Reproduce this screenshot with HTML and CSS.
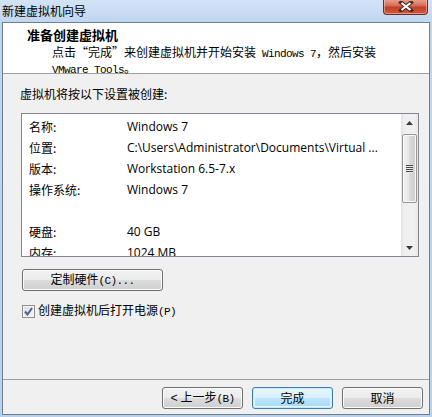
FILE: index.html
```html
<!DOCTYPE html>
<html lang="zh-CN">
<head>
<meta charset="utf-8">
<title>新建虚拟机向导</title>
<link rel="stylesheet" href="styles.css">
</head>
<body>
<div class="window">
  <div class="titlebar">
    <span class="title">新建虚拟机向导</span>
    <div class="close">
      <svg width="16" height="11" viewBox="0 0 16 11">
        <path d="M3 1.5 L13 9.5 M13 1.5 L3 9.5" stroke="#4a2a26" stroke-width="4" stroke-linecap="square" fill="none"/>
        <path d="M3.5 2 L12.5 9 M12.5 2 L3.5 9" stroke="#ffffff" stroke-width="2.2" fill="none"/>
      </svg>
    </div>
  </div>
  <div class="client">
    <div class="header">
      <div class="h-title">准备创建虚拟机</div>
      <div class="h-sub">点击“完成”来创建虚拟机并开始安装<span class="m"> Windows 7</span>，然后安装<br><span class="m">VMware Tools</span>。</div>
    </div>
    <div class="body">
      <div class="intro">虚拟机将按以下设置被创建:</div>
      <div class="listbox">
        <div class="rows">
          <div class="row"><span class="label">名称:</span><span class="value">Windows 7</span></div>
          <div class="row"><span class="label">位置:</span><span class="value">C:\Users\Administrator\Documents\Virtual ...</span></div>
          <div class="row"><span class="label">版本:</span><span class="value">Workstation 6.5-7.x</span></div>
          <div class="row"><span class="label">操作系统:</span><span class="value">Windows 7</span></div>
          <div class="row"><span class="label"></span><span class="value"></span></div>
          <div class="row"><span class="label">硬盘:</span><span class="value">40 GB</span></div>
          <div class="row"><span class="label">内存:</span><span class="value">1024 MB</span></div>
        </div>
        <div class="scrollbar">
          <div class="sb-btn">
            <svg width="7" height="4" viewBox="0 0 7 4"><path d="M3.5 0 L7 4 L0 4 Z" fill="#3a3a3a"/></svg>
          </div>
          <div class="sb-track">
            <div class="sb-thumb">
              <svg width="7" height="8" viewBox="0 0 7 8">
                <path d="M0 0.5 H7 M0 2.5 H7 M0 4.5 H7 M0 6.5 H7" stroke="#4b4b4b" stroke-width="1"/>
                <path d="M0 1.5 H7 M0 3.5 H7 M0 5.5 H7 M0 7.5 H7" stroke="#e8e8e8" stroke-width="1"/>
              </svg>
            </div>
          </div>
          <div class="sb-btn">
            <svg width="7" height="4" viewBox="0 0 7 4"><path d="M0 0 L7 0 L3.5 4 Z" fill="#3a3a3a"/></svg>
          </div>
        </div>
      </div>
      <button class="btn custom" type="button">定制硬件<span class="m">(C)...</span></button>
      <label class="check">
        <span class="box">
          <svg width="9" height="9" viewBox="0 0 9 9"><path d="M1 4.5 L3.5 7.5 L8 1" stroke="#4b5f9a" stroke-width="2" fill="none"/></svg>
        </span>
        <span>创建虚拟机后打开电源<span class="m">(P)</span></span>
      </label>
    </div>
    <div class="footer">
      <button class="btn nav" type="button"><span class="lt">&lt;</span> 上一步<span class="m">(B)</span></button>
      <button class="btn nav default" type="button">完成</button>
      <button class="btn nav" type="button">取消</button>
    </div>
  </div>
</div>
</body>
</html>
```
FILE: styles.css
```css
* { box-sizing: border-box; }
html, body { margin: 0; padding: 0; }
body {
  width: 432px;
  height: 417px;
  overflow: hidden;
  background: #bcd3ee;
  font-family: "Noto Sans CJK SC", sans-serif;
  font-size: 12px;
  color: #000;
}
.window {
  width: 432px;
  height: 417px;
  background: linear-gradient(#d2e3f6, #c0d6ef 22px, #bad1ec);
  display: flex;
  flex-direction: column;
}
.titlebar {
  height: 22px;
  position: relative;
  display: flex;
  align-items: center;
  padding: 0 0 1px 2px;
}
.title {
  font-size: 12px;
  line-height: 16px;
}
.close {
  position: absolute;
  left: 383px;
  top: -1px;
  width: 45px;
  height: 16px;
  border: 1px solid #6b2d24;
  border-top: none;
  border-radius: 0 0 4px 4px;
  background: linear-gradient(#e9a796, #d66b55 45%, #c23f28 55%, #cf5a40);
  box-shadow: inset 0 0 0 1px rgba(255, 210, 200, 0.5);
  display: flex;
  align-items: center;
  justify-content: center;
}
.client {
  margin-left: 2px;
  width: 428px;
  height: 393px;
  border: 1px solid #6f7f93;
  background: #f0f0f0;
  display: flex;
  flex-direction: column;
}
.header {
  height: 51px;
  flex: none;
  background: #fff;
  border-bottom: 1px solid #a0a0a0;
  padding: 4px 0 0 24px;
}
.h-title {
  font-weight: bold;
  font-size: 13px;
  line-height: 16px;
}
.h-sub {
  margin-top: 2px;
  padding-left: 25px;
  font-size: 12px;
  line-height: 14px;
}
.m {
  font-family: "Liberation Mono", monospace;
  font-size: 11px;
  letter-spacing: -0.6px;
}
.body {
  flex: 1;
  padding: 12px 0 0 17px;
  display: flex;
  flex-direction: column;
  align-items: flex-start;
}
.intro {
  line-height: 16px;
}
.listbox {
  margin: 11px 0 0 1px;
  width: 398px;
  height: 144px;
  border: 1px solid #828790;
  background: #fff;
  display: flex;
  overflow: hidden;
}
.rows {
  flex: 1;
  padding-top: 2px;
  overflow: hidden;
}
.row {
  display: flex;
  height: 21px;
  line-height: 21px;
  padding-left: 7px;
  white-space: nowrap;
}
.label {
  width: 98px;
  flex: none;
}
.value {
  font-family: "Open Sans", sans-serif;
  font-size: 12px;
}
.scrollbar {
  width: 17px;
  flex: none;
  display: flex;
  flex-direction: column;
  background: linear-gradient(90deg, #e3e3e3, #f0f0f0 20%, #f0f0f0 80%, #e6e6e6);
}
.sb-btn {
  height: 17px;
  display: flex;
  align-items: center;
  justify-content: center;
}
.sb-track {
  flex: 1;
  padding: 3px 1px 0 1px;
}
.sb-thumb {
  height: 69px;
  border: 1px solid #979797;
  border-radius: 2px;
  background: linear-gradient(90deg, #f3f3f3, #e6e6e6 45%, #d6d6d6 55%, #cfcfcf);
  box-shadow: inset 0 0 0 1px #f8f8f8;
  display: flex;
  align-items: center;
  justify-content: center;
}
.btn {
  height: 22px;
  padding: 0;
  border: 1px solid #707070;
  border-radius: 3px;
  background: linear-gradient(#f2f2f2 0%, #ebebeb 50%, #dddddd 50%, #cfcfcf 100%);
  box-shadow: inset 0 0 0 1px #fbfbfb;
  font-family: "Noto Sans CJK SC", sans-serif;
  font-size: 12px;
  line-height: 18px;
  color: #000;
}
.custom {
  margin: 12px 0 0 2px;
  width: 141px;
}
.check {
  margin: 12px 0 0 2px;
  display: flex;
  align-items: center;
  gap: 3px;
  line-height: 14px;
}
.box {
  width: 13px;
  height: 13px;
  border: 1px solid #8e8f8f;
  background: linear-gradient(135deg, #dcdcdc, #f8f8f8);
  box-shadow: inset 0 0 0 1px #f4f4f4;
  display: flex;
  align-items: center;
  justify-content: center;
}
.footer {
  height: 35px;
  flex: none;
  border-top: 1px solid #a0a0a0;
  display: flex;
  justify-content: flex-end;
  gap: 9px;
  padding: 7px 6px 0 0;
}
.nav {
  width: 81px;
}
.lt {
  font-family: "Liberation Mono", monospace;
}
.default {
  border-color: #3c7fb1;
  background: linear-gradient(#e9f5fc 0%, #d9effb 50%, #bee6fd 50%, #a7d9f5 100%);
  box-shadow: inset 0 0 0 1px #c4ebfd, inset 0 0 0 2px #e8f6fd;
}
```
